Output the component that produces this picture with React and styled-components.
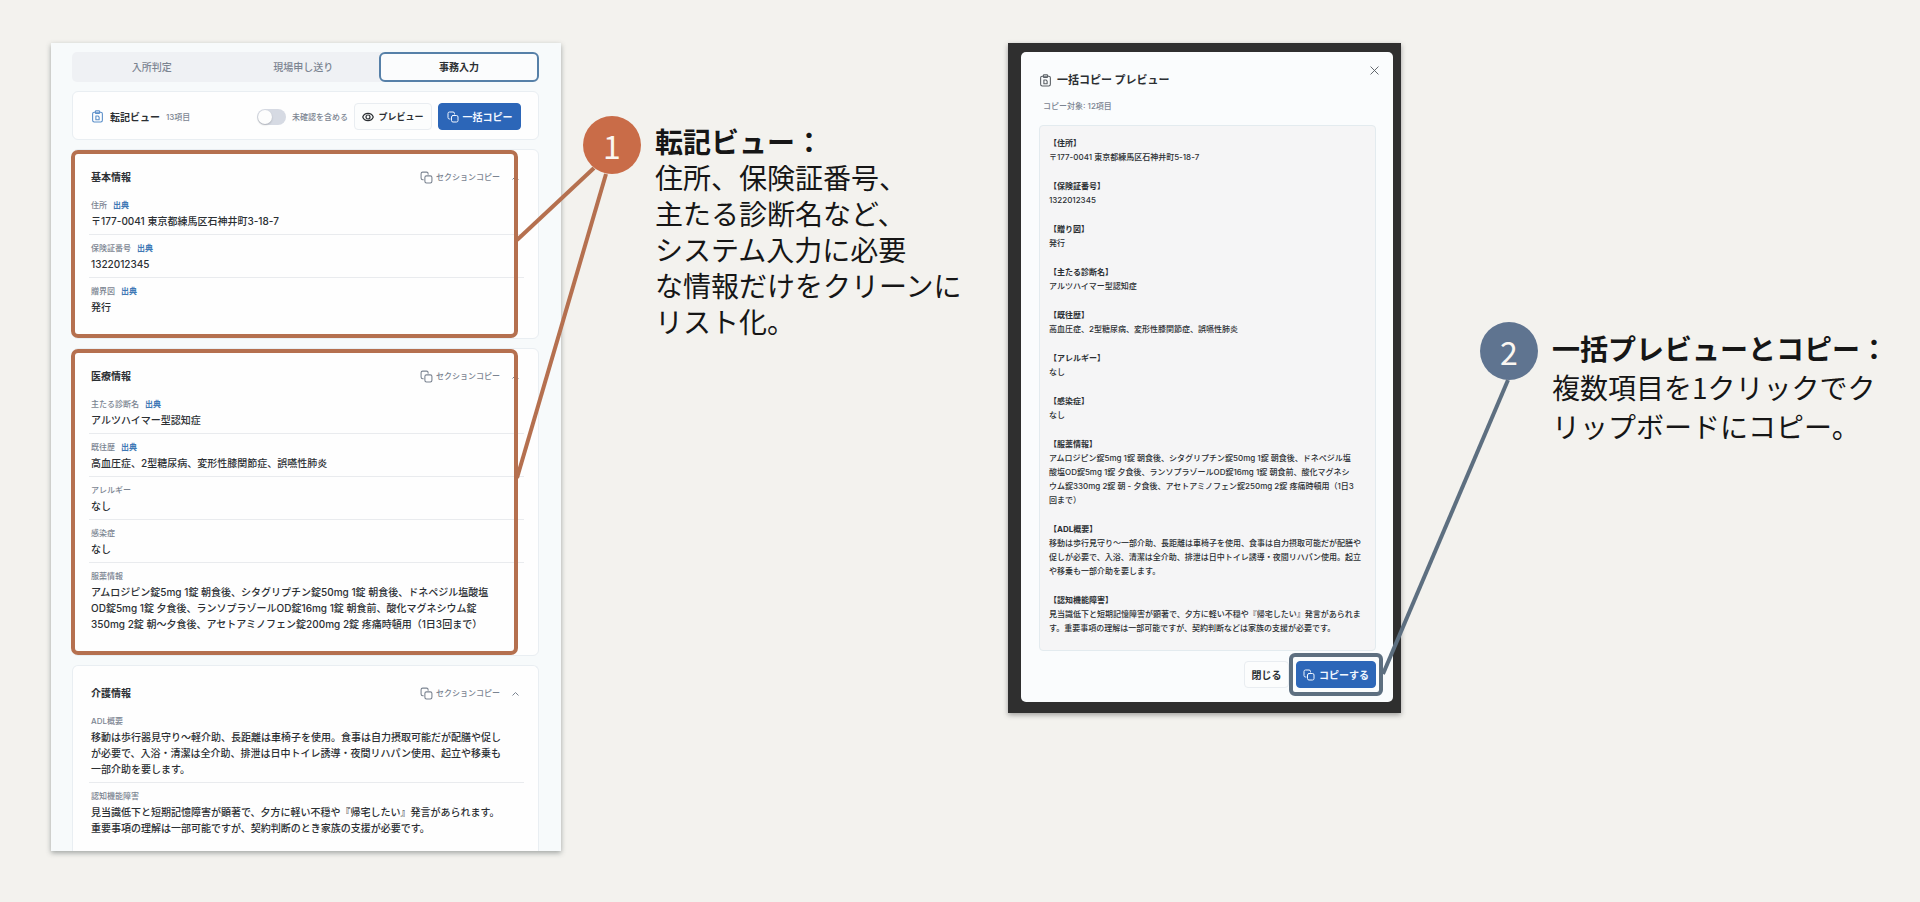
import React from "react";
import styled, { createGlobalStyle, css } from "styled-components";

const C = {
  page: "#f3f2ee",
  orange: "#b5704f",
  orangeDot: "#c96c48",
  slate: "#5d6f80",
  slateDot: "#5f7490",
  blue: "#2c66b8",
  ink: "#2b2f33",
  muted: "#7b8491",
};

const GlobalStyle = createGlobalStyle`
  *, *::before, *::after { box-sizing: border-box; }
  body {
    margin: 0;
    background: ${C.page};
    color: ${C.ink};
    font-family: Inter, "Noto Sans CJK JP", sans-serif;
  }
  button { font-family: inherit; margin: 0; cursor: pointer; }
  h1, h2, h3, p, dl, dt, dd { margin: 0; }
`;

const Board = styled.main`
  position: relative;
  display: grid;
  grid-template-columns:
    minmax(0, 51fr) minmax(0, 510fr) minmax(0, 22fr) minmax(0, 398fr)
    minmax(0, 27fr) minmax(0, 393fr) minmax(0, 79fr) minmax(0, 440fr);
  align-items: start;
  padding: 43px 0 51px;
`;

const Connectors = styled.svg`
  position: absolute;
  top: 0;
  left: 0;
  width: 100%;
  height: 902px;
  pointer-events: none;
  line { stroke-width: 4; vector-effect: non-scaling-stroke; }
`;

const RecordPanel = styled.section`
  grid-column: 2;
  display: flex;
  flex-direction: column;
  gap: 9px;
  padding: 9px 22px 0 21px;
  background: #f7fafb;
  box-shadow: 0 2px 5px rgba(60, 70, 70, 0.45);
`;

const Tabs = styled.div`
  display: grid;
  grid-template-columns: 1fr 1fr 160px;
  height: 30px;
  padding-left: 4px;
  border-radius: 5px;
  background: #eff1f4;
`;

const Tab = styled.button`
  border: 0;
  padding: 0;
  background: transparent;
  font-size: 10px;
  line-height: 14px;
  font-weight: 500;
  color: ${C.muted};
  ${(p) =>
    p["aria-selected"] &&
    css`
      border: 2px solid #5680a8;
      border-radius: 6px;
      background: #fbfcfd;
      color: ${C.ink};
      font-weight: 700;
    `}
`;

const Card = styled.article`
  position: relative;
  border: 1px solid #e9eef2;
  border-radius: 6px;
  background: #fefefe;
`;

const Toolbar = styled(Card)`
  display: flex;
  align-items: center;
  gap: 6px;
  padding: 11px 17px 9px 18px;
`;

const ToolbarTitle = styled.h2`
  display: flex;
  align-items: center;
  gap: 6px;
  font-size: 10px;
  line-height: 16px;
  font-weight: 700;
  svg { color: #5b8fc9; }
`;

const Count = styled.span`
  font-size: 8px;
  font-weight: 500;
  color: ${C.muted};
`;

const Switch = styled.label`
  display: flex;
  align-items: center;
  gap: 6px;
  margin-left: auto;
  font-size: 8px;
  font-weight: 500;
  color: ${C.muted};
  input {
    appearance: none;
    width: 29px;
    height: 16px;
    margin: 0;
    border-radius: 8px;
    background: #d6dae3;
    &::before {
      content: "";
      display: block;
      width: 14px;
      height: 14px;
      margin: 1px;
      border-radius: 50%;
      background: #fdfdfd;
      box-shadow: 0 1px 2px rgba(0, 0, 0, 0.2);
    }
  }
`;

const Button = styled.button`
  display: flex;
  align-items: center;
  justify-content: center;
  gap: 4px;
  width: ${(p) => p.$width}px;
  height: 27px;
  padding: 0;
  border: 1px solid ${(p) => (p.$primary ? C.blue : "#e9edf1")};
  border-radius: 4px;
  background: ${(p) => (p.$primary ? C.blue : "#fcfdfd")};
  color: ${(p) => (p.$primary ? "#f2f7ff" : C.ink)};
  font-size: ${(p) => p.$size || 10}px;
  font-weight: 700;
  white-space: nowrap;
`;

const SectionCard = styled(Card)`
  padding: 19px 14px ${(p) => (p.$cut ? 9 : 17)}px 16px;
  ${(p) =>
    p.$cut &&
    css`
      border-bottom: 0;
      border-radius: 6px 6px 0 0;
    `}
  ${(p) =>
    p.$marked &&
    css`
      &::after {
        content: "";
        position: absolute;
        inset: 0 20px 0 -2px;
        border: 4px solid ${C.orange};
        border-radius: 7px;
        pointer-events: none;
      }
    `}
`;

const SectionHeader = styled.header`
  display: flex;
  align-items: center;
  height: 16px;
  margin-bottom: 7px;
  padding: 0 5px 0 2px;
  h3 { font-size: 10px; line-height: 16px; font-weight: 700; }
`;

const QuietButton = styled.button`
  display: flex;
  align-items: center;
  gap: 3px;
  padding: 0;
  border: 0;
  background: none;
  color: ${C.muted};
  font-size: 8px;
  line-height: 16px;
  font-weight: 500;
`;

const SectionActions = styled.div`
  display: flex;
  align-items: center;
  gap: 12px;
  margin-left: auto;
`;

const SectionRows = styled.dl`
  padding-bottom: 1px;
`;

const Row = styled.div`
  padding: 6px 2px 5px;
  & + & { border-top: 1px solid #e9ebee; }
  dt {
    display: flex;
    gap: 6px;
    font-size: 8px;
    line-height: 15px;
    font-weight: 500;
    color: ${C.muted};
  }
  dd {
    font-size: 10px;
    line-height: 16px;
    font-weight: 500;
    white-space: pre;
  }
`;

const SourceLink = styled.a`
  color: #3f78b5;
  font-weight: 700;
  text-decoration: none;
`;

const Backdrop = styled.section`
  grid-column: 6;
  padding: 9px 8px 11px 13px;
  background: #2f2f2f;
  box-shadow: 0 2px 5px rgba(60, 60, 60, 0.45);
`;

const Dialog = styled.div`
  display: flex;
  flex-direction: column;
  padding: 12px 17px 14px 18px;
  border-radius: 5px;
  background: #fafcfd;
`;

const DialogHeader = styled.header`
  display: flex;
  align-items: flex-start;
  justify-content: space-between;
  margin-right: -5px;
  h2 {
    display: flex;
    align-items: center;
    gap: 5px;
    padding-top: 8px;
    font-size: 11px;
    line-height: 16px;
    font-weight: 700;
    svg { color: #5a5f65; }
  }
`;

const CloseButton = styled.button`
  display: flex;
  padding: 1px;
  border: 0;
  background: none;
  color: #555b61;
`;

const DialogNote = styled.p`
  padding: 10px 0 11px 4px;
  font-size: 8px;
  line-height: 16px;
  font-weight: 500;
  color: ${C.muted};
`;

const Preview = styled.dl`
  display: flex;
  flex-direction: column;
  gap: 15px;
  padding: 10px 9px 15px;
  border: 1px solid #e3ebef;
  border-radius: 4px;
  background: #f5f5f6;
  font-size: 8px;
  line-height: 14px;
  font-weight: 500;
  dt { font-weight: 700; }
  dd { white-space: pre; }
`;

const DialogFooter = styled.footer`
  display: flex;
  justify-content: flex-end;
  gap: 7px;
  margin-top: 10px;
`;

const Marked = styled.div`
  position: relative;
  &::after {
    content: "";
    position: absolute;
    inset: -8px -7px;
    border: 4px solid ${C.slate};
    border-radius: 6px;
    pointer-events: none;
  }
`;

const Callout = styled.aside`
  grid-column: ${(p) => p.$column};
  display: flex;
  align-items: flex-start;
  gap: 14px;
  margin-top: ${(p) => p.$top}px;
  font-family: "Noto Sans CJK JP", sans-serif;
`;

const Dot = styled.span`
  display: flex;
  flex: none;
  align-items: center;
  justify-content: center;
  width: 58px;
  height: 58px;
  border-radius: 50%;
  background: ${(p) => p.$color};
  color: #fbf7f2;
  font-size: 32px;
  line-height: 32px;
`;

const CalloutText = styled.div`
  padding-top: 7px;
  font-size: 28px;
  line-height: ${(p) => p.$line}px;
  color: #161616;
  white-space: pre;
  h2 { font-size: 28px; font-weight: 700; }
`;

const Svg = ({ size, children, sw = 2 }) => (
  <svg width={size} height={size} viewBox="0 0 24 24" fill="none" stroke="currentColor"
    strokeWidth={sw} strokeLinecap="round" strokeLinejoin="round" aria-hidden="true">
    {children}
  </svg>
);

const CopyIcon = ({ size = 13 }) => (
  <Svg size={size}>
    <rect x="9" y="9" width="13" height="13" rx="3" />
    <path d="M6 16H5a3 3 0 0 1-3-3V5a3 3 0 0 1 3-3h7a3 3 0 0 1 3 3v1" />
  </Svg>
);

const ClipboardIcon = () => (
  <Svg size={13} sw={2}>
    <rect x="3" y="4" width="18" height="18" rx="3" />
    <rect x="8" y="1.5" width="8" height="5" rx="1.5" />
    <path d="M9 11v7h6v-5l-2-2z" />
  </Svg>
);

const EyeIcon = () => (
  <Svg size={12} sw={2.4}>
    <path d="M1.5 12C5 2.500 19 2.500 22.500 12 19 21.500 5 21.500 1.500 12z" />
    <circle cx="12" cy="12" r="4" />
  </Svg>
);

const ChevronIcon = () => (
  <svg width="7" height="5" viewBox="0 0 7 5" fill="none" stroke="currentColor" aria-hidden="true">
    <path d="M.5 4.500l3-3 3 3" />
  </svg>
);

const sections = [
  {
    title: "基本情報",
    marked: true,
    rows: [
      { label: "住所", source: true, value: "〒177-0041 東京都練馬区石神井町3-18-7" },
      { label: "保険証番号", source: true, value: "1322012345" },
      { label: "贈界図", source: true, value: "発行" },
    ],
  },
  {
    title: "医療情報",
    marked: true,
    rows: [
      { label: "主たる診断名", source: true, value: "アルツハイマー型認知症" },
      { label: "既往歴", source: true, value: "高血圧症、2型糖尿病、変形性膝関節症、誤嚥性肺炎" },
      { label: "アレルギー", value: "なし" },
      { label: "感染症", value: "なし" },
      {
        label: "服薬情報",
        value:
          "アムロジピン錠5mg 1錠 朝食後、シタグリプチン錠50mg 1錠 朝食後、ドネペジル塩酸塩\nOD錠5mg 1錠 夕食後、ランソプラゾールOD錠16mg 1錠 朝食前、酸化マグネシウム錠\n350mg 2錠 朝〜夕食後、アセトアミノフェン錠200mg 2錠 疼痛時頓用（1日3回まで）",
      },
    ],
  },
  {
    title: "介護情報",
    cut: true,
    rows: [
      {
        label: "ADL概要",
        value:
          "移動は歩行器見守り〜軽介助、長距離は車椅子を使用。食事は自力摂取可能だが配膳や促し\nが必要で、入浴・清潔は全介助、排泄は日中トイレ誘導・夜間リハパン使用、起立や移乗も\n一部介助を要します。",
      },
      {
        label: "認知機能障害",
        value:
          "見当識低下と短期記憶障害が顕著で、夕方に軽い不穏や『帰宅したい』発言があられます。\n重要事項の理解は一部可能ですが、契約判断のとき家族の支援が必要です。",
      },
    ],
  },
];

const previewItems = [
  ["住所", "〒177-0041 東京都練馬区石神井町5-18-7"],
  ["保険証番号", "1322012345"],
  ["贈り図", "発行"],
  ["主たる診断名", "アルツハイマー型認知症"],
  ["既往歴", "高血圧症、2型糖尿病、変形性膝関節症、誤嚥性肺炎"],
  ["アレルギー", "なし"],
  ["感染症", "なし"],
  [
    "服薬情報",
    "アムロジピン錠5mg 1錠 朝食後、シタグリプチン錠50mg 1錠 朝食後、ドネペジル塩\n酸塩OD錠5mg 1錠 夕食後、ランソプラゾールOD錠16mg 1錠 朝食前、酸化マグネシ\nウム錠330mg 2錠 朝 - 夕食後、アセトアミノフェン錠250mg 2錠 疼痛時頓用（1日3\n回まで）",
  ],
  [
    "ADL概要",
    "移動は歩行見守り〜一部介助、長距離は車椅子を使用、食事は自力摂取可能だが配膳や\n促しが必要で、入浴、清潔は全介助、排泄は日中トイレ誘導・夜間リハパン使用。起立\nや移乗も一部介助を要します。",
  ],
  [
    "認知機能障害",
    "見当識低下と短期記憶障害が顕著で、夕方に軽い不穏や『帰宅したい』発言があられま\nす。重要事項の理解は一部可能ですが、契約判断などは家族の支援が必要です。",
  ],
];

function Section({ title, rows, marked, cut }) {
  return (
    <SectionCard $marked={marked} $cut={cut}>
      <SectionHeader>
        <h3>{title}</h3>
        <SectionActions>
          <QuietButton type="button">
            <CopyIcon />
            セクションコピー
          </QuietButton>
          <QuietButton type="button" aria-label="折りたたむ">
            <ChevronIcon />
          </QuietButton>
        </SectionActions>
      </SectionHeader>
      <SectionRows>
        {rows.map((r) => (
          <Row key={r.label}>
            <dt>
              {r.label}
              {r.source && <SourceLink href="#source">出典</SourceLink>}
            </dt>
            <dd>{r.value}</dd>
          </Row>
        ))}
      </SectionRows>
    </SectionCard>
  );
}

export default function App() {
  return (
    <>
      <GlobalStyle />
      <Board>
        <RecordPanel>
          <Tabs role="tablist">
            <Tab type="button" role="tab" aria-selected={false}>入所判定</Tab>
            <Tab type="button" role="tab" aria-selected={false}>現場申し送り</Tab>
            <Tab type="button" role="tab" aria-selected>事務入力</Tab>
          </Tabs>
          <Toolbar>
            <ToolbarTitle>
              <ClipboardIcon />
              転記ビュー
              <Count>13項目</Count>
            </ToolbarTitle>
            <Switch htmlFor="include-unverified">
              <input id="include-unverified" type="checkbox" role="switch" />
              未確認を含める
            </Switch>
            <Button type="button" $width={78} $size={9}>
              <EyeIcon />
              プレビュー
            </Button>
            <Button type="button" $primary $width={83}>
              <CopyIcon size={12} />
              一括コピー
            </Button>
          </Toolbar>
          {sections.map((s) => (
            <Section key={s.title} {...s} />
          ))}
        </RecordPanel>

        <Callout $column={4} $top={73}>
          <Dot $color={C.orangeDot}>1</Dot>
          <CalloutText $line={36}>
            <h2>転記ビュー：</h2>
            <p>{"住所、保険証番号、\n主たる診断名など、\nシステム入力に必要\nな情報だけをクリーンに\nリスト化。"}</p>
          </CalloutText>
        </Callout>

        <Backdrop>
          <Dialog role="dialog" aria-labelledby="preview-title">
            <DialogHeader>
              <h2 id="preview-title">
                <ClipboardIcon />
                一括コピー プレビュー
              </h2>
              <CloseButton type="button" aria-label="閉じる">
                <Svg size={11}>
                  <path d="M4 4l16 16M20 4L4 20" />
                </Svg>
              </CloseButton>
            </DialogHeader>
            <DialogNote>コピー対象: 12項目</DialogNote>
            <Preview>
              {previewItems.map(([label, value]) => (
                <div key={label}>
                  <dt>【{label}】</dt>
                  <dd>{value}</dd>
                </div>
              ))}
            </Preview>
            <DialogFooter>
              <Button type="button" $width={45}>閉じる</Button>
              <Marked>
                <Button type="button" $primary $width={80}>
                  <CopyIcon size={12} />
                  コピーする
                </Button>
              </Marked>
            </DialogFooter>
          </Dialog>
        </Backdrop>

        <Callout $column={8} $top={279}>
          <Dot $color={C.slateDot}>2</Dot>
          <CalloutText $line={39}>
            <h2>一括プレビューとコピー：</h2>
            <p>{"複数項目を1クリックでク\nリップボードにコピー。"}</p>
          </CalloutText>
        </Callout>

        <Connectors viewBox="0 0 1920 902" preserveAspectRatio="none" aria-hidden="true">
          <line x1="517" y1="240" x2="594" y2="168" stroke={C.orange} />
          <line x1="517" y1="478" x2="606" y2="174" stroke={C.orange} />
          <line x1="1383" y1="674" x2="1508" y2="380" stroke={C.slate} />
        </Connectors>
      </Board>
    </>
  );
}
